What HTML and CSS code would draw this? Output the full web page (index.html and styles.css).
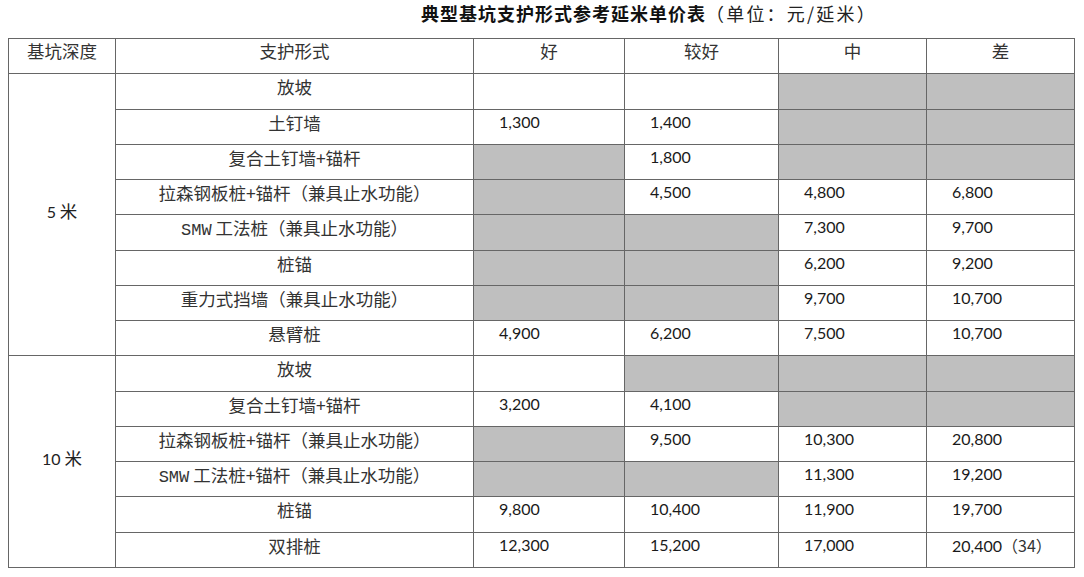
FILE: index.html
```html
<!DOCTYPE html>
<html lang="zh-CN">
<head>
<meta charset="utf-8">
<title>典型基坑支护形式参考延米单价表</title>
<link rel="stylesheet" href="styles.css">
</head>
<body>
<div class="title"><b>典型基坑支护形式参考延米单价表</b><span class="unit">（单位：元/延米）</span></div>
<table class="price">
  <colgroup>
    <col class="c-depth"><col class="c-form"><col class="c-a"><col class="c-b"><col class="c-c"><col class="c-d">
  </colgroup>
  <thead>
    <tr><th>基坑深度</th><th>支护形式</th><th>好</th><th>较好</th><th>中</th><th>差</th></tr>
  </thead>
  <tbody>
    <tr><td class="depth" rowspan="8"><span class="num">5</span> 米</td><td class="form">放坡</td><td></td><td></td><td class="na"></td><td class="na"></td></tr>
    <tr><td class="form">土钉墙</td><td class="num">1,300</td><td class="num">1,400</td><td class="na"></td><td class="na"></td></tr>
    <tr><td class="form">复合土钉墙+锚杆</td><td class="na"></td><td class="num">1,800</td><td class="na"></td><td class="na"></td></tr>
    <tr><td class="form">拉森钢板桩+锚杆（兼具止水功能）</td><td class="na"></td><td class="num">4,500</td><td class="num">4,800</td><td class="num">6,800</td></tr>
    <tr><td class="form"><span class="lat">SMW</span> 工法桩（兼具止水功能）</td><td class="na"></td><td class="na"></td><td class="num">7,300</td><td class="num">9,700</td></tr>
    <tr><td class="form">桩锚</td><td class="na"></td><td class="na"></td><td class="num">6,200</td><td class="num">9,200</td></tr>
    <tr><td class="form">重力式挡墙（兼具止水功能）</td><td class="na"></td><td class="na"></td><td class="num">9,700</td><td class="num">10,700</td></tr>
    <tr><td class="form">悬臂桩</td><td class="num">4,900</td><td class="num">6,200</td><td class="num">7,500</td><td class="num">10,700</td></tr>
    <tr><td class="depth" rowspan="6"><span class="num">10</span> 米</td><td class="form">放坡</td><td></td><td class="na"></td><td class="na"></td><td class="na"></td></tr>
    <tr><td class="form">复合土钉墙+锚杆</td><td class="num">3,200</td><td class="num">4,100</td><td class="na"></td><td class="na"></td></tr>
    <tr><td class="form">拉森钢板桩+锚杆（兼具止水功能）</td><td class="na"></td><td class="num">9,500</td><td class="num">10,300</td><td class="num">20,800</td></tr>
    <tr><td class="form"><span class="lat">SMW</span> 工法桩+锚杆（兼具止水功能）</td><td class="na"></td><td class="na"></td><td class="num">11,300</td><td class="num">19,200</td></tr>
    <tr><td class="form">桩锚</td><td class="num">9,800</td><td class="num">10,400</td><td class="num">11,900</td><td class="num">19,700</td></tr>
    <tr><td class="form">双排桩</td><td class="num">12,300</td><td class="num">15,200</td><td class="num">17,000</td><td class="num">20,400<span class="note">（34）</span></td></tr>
  </tbody>
</table>
</body>
</html>
```
FILE: styles.css
```css
html, body {
  margin: 0;
  padding: 0;
  background: #ffffff;
}
body {
  font-family: "Noto Sans CJK SC", sans-serif;
  color: #2a2a2a;
}
.title {
  height: 38px;
  box-sizing: border-box;
  padding: 2px 0 0 421px;
  font-size: 18px;
  line-height: 22px;
  color: #111;
  white-space: nowrap;
}
.title b {
  font-weight: 700;
  letter-spacing: 1px;
}
.title .unit {
  font-weight: 400;
  color: #222;
  letter-spacing: 2.2px;
}
.price {
  margin-left: 8px;
  width: 1066px;
  border-collapse: collapse;
  table-layout: fixed;
  border: 1px solid #555;
}
.c-depth { width: 107px; }
.c-form { width: 358px; }
.c-a { width: 151px; }
.c-b { width: 154px; }
.c-c { width: 148px; }
.c-d { width: 148px; }
.price tr { height: 35.25px; }
.price th,
.price td {
  border: 1px solid #666;
  padding: 0;
  vertical-align: top;
  font-weight: 400;
  font-size: 17.5px;
  line-height: 24px;
  padding-top: 1px;
  text-align: center;
  color: #333;
  white-space: nowrap;
}
.price th {
  padding-top: 0;
}
.lat {
  font-family: "Liberation Mono", monospace;
  font-size: 17px;
}
.price td.num {
  font-family: "Lato", "Liberation Sans", sans-serif;
  font-size: 16px;
  text-align: left;
  padding-left: 25px;
  padding-top: 0;
  color: #1a1a1a;
}
.price td.depth {
  vertical-align: middle;
  padding-top: 0;
  padding-bottom: 6px;
  color: #222;
}
.depth .num {
  font-family: "Lato", "Liberation Sans", sans-serif;
  font-size: 16px;
}
.price td.na {
  background: #bfbfbf;
}
.note {
  font-family: "Noto Sans CJK SC", sans-serif;
  font-size: 16px;
  color: #333;
}
```
